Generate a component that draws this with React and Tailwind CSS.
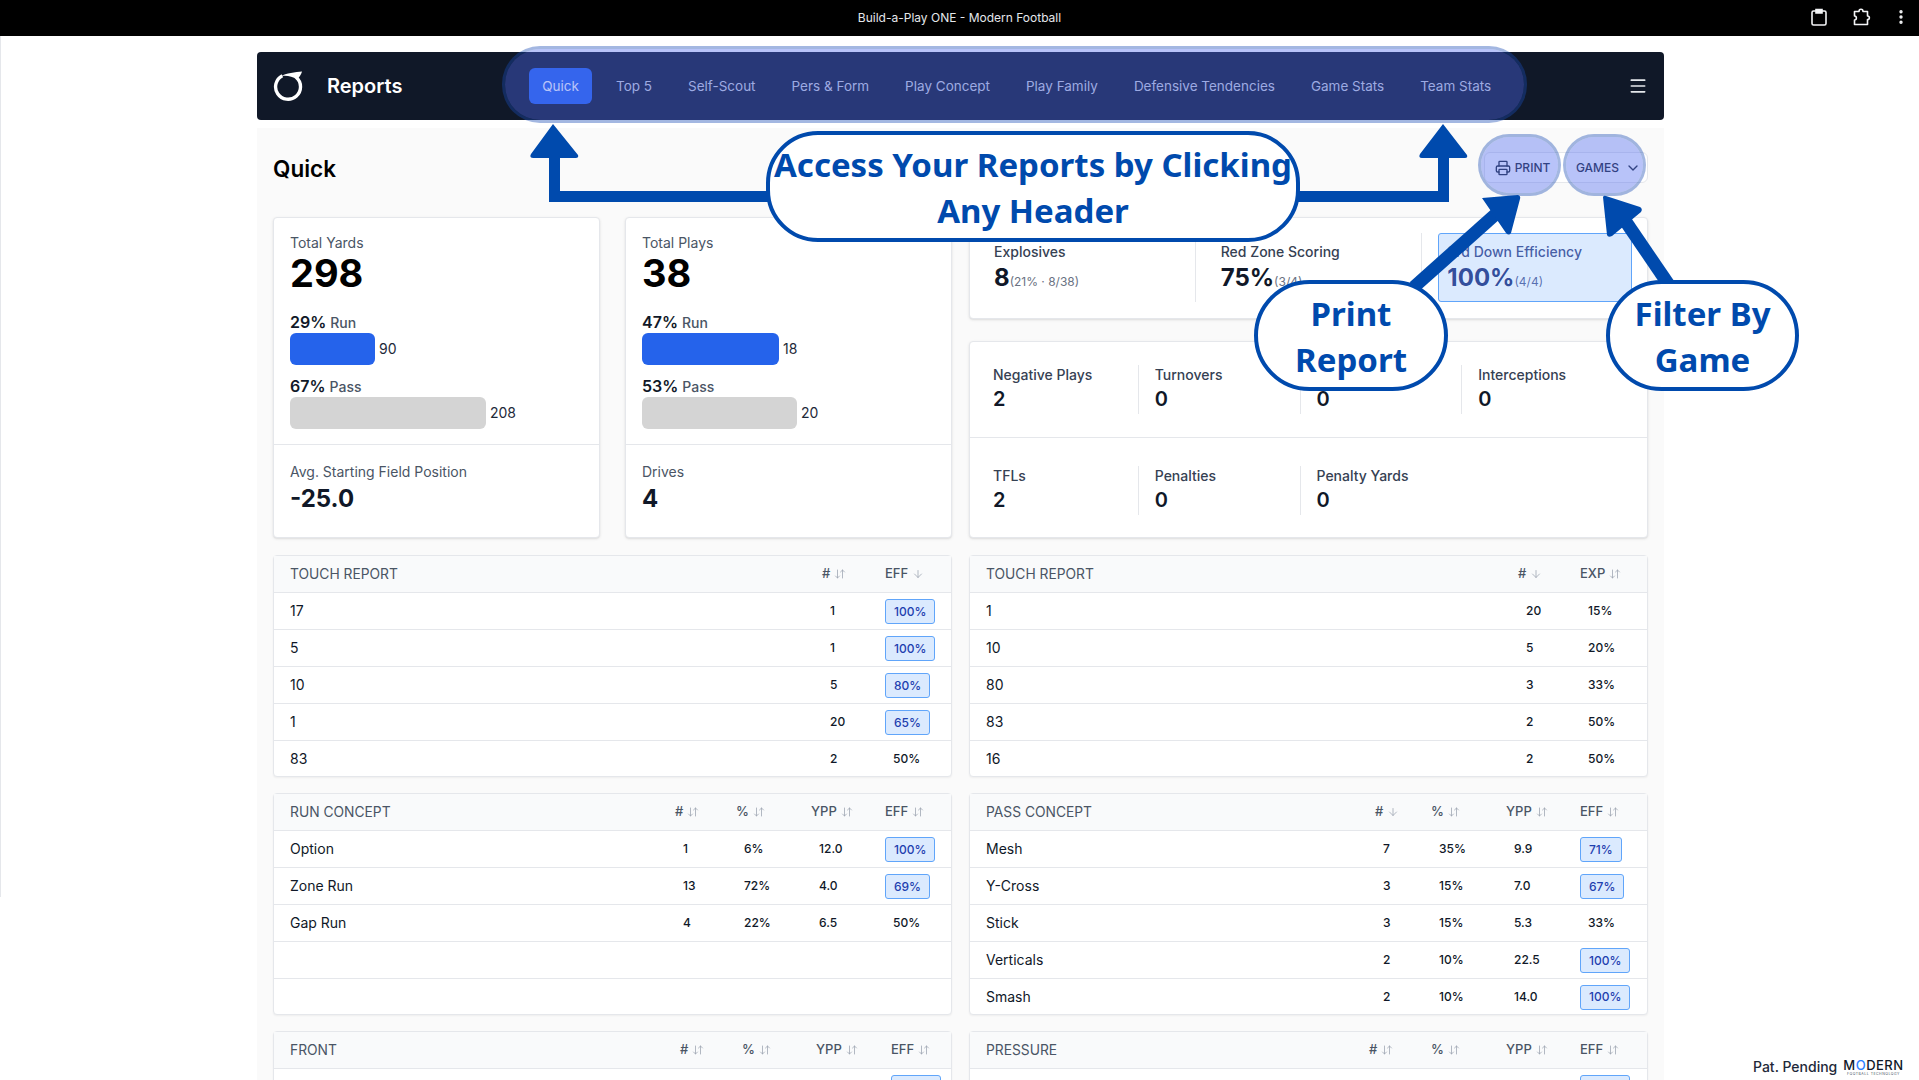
import React from "react";
import { ArrowDown, ArrowDownUp, ChevronDown, EllipsisVertical, Menu, Printer } from "lucide-react";

const NAV = ["Top 5", "Self-Scout", "Pers & Form", "Play Concept", "Play Family", "Defensive Tendencies", "Game Stats", "Team Stats"];

const Badge = ({ children }) => (
  <span className="inline-flex h-[25px] items-center rounded-[3px] border-[1.5px] border-[#60a5fa] bg-[#dbeafe] px-2 text-xs font-medium text-[#1e40af]">
    {children}
  </span>
);

// b() marks a cell that shows up as a highlighted badge
const b = (text) => ({ badge: text });

const Head = ({ label, down }) => (
  <div className="flex items-center gap-1 text-[13px] font-medium text-gray-600">
    {label}
    {down ? <ArrowDown className="size-3 text-gray-400" strokeWidth={1.5} /> : <ArrowDownUp className="size-3 text-gray-400" strokeWidth={1.5} />}
  </div>
);

const DataTable = ({ title, cols, heads, rows }) => (
  <div className="rounded-[4px] border border-gray-200 bg-white shadow-xs">
    <div className={`grid h-[36px] items-center bg-gray-50 ${cols}`}>
      <div className="pl-4 text-[13.8px] text-gray-600">{title}</div>
      {heads.map((h) => (
        <Head key={h.label} label={h.label} down={h.down} />
      ))}
    </div>
    {rows.map((row, i) => (
      <div key={i} className={`grid h-[37px] items-center border-t border-gray-200 last:h-[36px] ${cols}`}>
        <div className="pl-4 text-sm text-gray-900">{row[0]}</div>
        {row.slice(1).map((cell, j) =>
          cell.badge ? (
            <div key={j}>
              <Badge>{cell.badge}</Badge>
            </div>
          ) : (
            <div key={j} className="pl-2 text-xs font-medium text-gray-900">
              {cell}
            </div>
          )
        )}
      </div>
    ))}
  </div>
);

const BarRow = ({ pct, label, value, barClass }) => (
  <div>
    <div className="flex h-5 items-baseline gap-1 leading-5">
      <span className="text-base font-semibold text-gray-900">{pct}</span>
      <span className="text-sm font-medium text-gray-600">{label}</span>
    </div>
    <div className="mt-[3px] flex items-center gap-1">
      <div className={`h-8 rounded-md ${barClass}`} />
      <span className="text-sm text-gray-800">{value}</span>
    </div>
  </div>
);

const TotalCard = ({ label, total, run, pass, footLabel, footValue }) => (
  <div className="h-[321px] rounded-[4px] border border-gray-200 bg-white shadow-sm">
    <div className="h-[227px] border-b border-gray-200 px-4 pt-[15px]">
      <div className="text-sm leading-5 text-gray-600">{label}</div>
      <div className="text-[38px] font-bold leading-10 text-black">{total}</div>
      <div className="mt-[17px]">
        <BarRow {...run} />
      </div>
      <div className="mt-[9px]">
        <BarRow {...pass} />
      </div>
    </div>
    <div className="px-4 pt-[17px]">
      <div className="text-sm leading-5 text-gray-600">{footLabel}</div>
      <div className="mt-px text-2xl font-bold text-gray-900">{footValue}</div>
    </div>
  </div>
);

const Stat = ({ label, value, last }) => (
  <div className={`mr-2 h-[49px] pl-2 ${last ? "" : "border-r border-gray-200"}`}>
    <div className="text-sm font-medium leading-5 text-gray-700">{label}</div>
    <div className="text-xl font-semibold leading-7 text-gray-900">{value}</div>
  </div>
);

const Kpi = ({ label, value, note, active }) => (
  <div className={`h-[69px] flex-1 rounded-[3px] border px-2 py-2 ${active ? "border-[#60a5fa] bg-[#dbeafe]" : "border-transparent"}`}>
    <div className={`text-sm font-medium leading-5 ${active ? "text-blue-900/80" : "text-gray-700"}`}>{label}</div>
    <div className={`flex items-baseline text-2xl font-bold leading-8 ${active ? "text-blue-900/90" : "text-gray-900"}`}>
      {value}
      <span className={`text-xs font-normal ${active ? "text-blue-900/70" : "text-gray-500"}`}>{note}</span>
    </div>
  </div>
);

const Callout = ({ className, children }) => (
  <div className={`absolute flex items-center justify-center whitespace-nowrap border-4 border-[#004aad] bg-white pt-0.5 text-center font-['Noto_Sans',sans-serif] font-bold text-[#004aad] ${className}`}>
    <div>{children}</div>
  </div>
);

const Arrows = () => (
  <svg className="pointer-events-none absolute left-0 top-0" width="1919" height="1080" fill="#004aad">
    <path d="M553 124 L578 155 Q579 158 576 158 L560 158 L560 191 L770 191 L770 202 L549 202 L549 158 L533 158 Q529 158 531 154 Z" strokeLinejoin="round" />
    <path d="M1443 124 L1467 155 Q1468 158 1465 158 L1449 158 L1449 202 L1298 202 L1298 191 L1438 191 L1438 158 L1422 158 Q1418 158 1420 154 Z" />
    <path d="M1414 287 L1497 213" stroke="#004aad" strokeWidth="13" />
    <path d="M1482 198 L1518 195 Q1521 196 1520 199 L1511 233 Q1509 236 1506 233 Z" />
    <path d="M1671 288 L1626 222" stroke="#004aad" strokeWidth="13" />
    <path d="M1603 197 Q1604 195 1606 196 L1640 207 Q1643 209 1641 212 L1612 236 Q1608 238 1607 235 Z" />
  </svg>
);

export default function App() {
  return (
    <div className="relative h-screen overflow-hidden bg-white font-['Inter',sans-serif]">
      {/* browser title bar */}
      <div className="relative flex h-9 items-center justify-center bg-black text-xs text-gray-200">
        Build-a-Play ONE - Modern Football
        <div className="absolute right-[9px] top-[8px] flex items-center text-gray-100">
          <svg width="16" height="18" viewBox="0 0 16 18" fill="none" stroke="currentColor" strokeWidth="1.6">
            <rect x="1" y="3" width="14" height="14" rx="1.5" />
            <path d="M5 1.5h6V5H5z" fill="currentColor" />
          </svg>
          <svg className="ml-[26px]" width="18" height="18" viewBox="0 0 18 18" fill="none" stroke="currentColor" strokeWidth="1.6" strokeLinejoin="round">
            <path d="M1.5 3.5h4.5c0-3 4-3 4 0h4.5v4.5c2.5 0 2.5 3.5 0 3.5v5H1.5v-4.5c2.5 0 2.5-4 0-4z" />
          </svg>
          <EllipsisVertical className="ml-[21px] size-[18px]" strokeWidth={2.5} />
        </div>
      </div>

      <div className="ml-[257px] w-[1407px] pt-4">
        {/* reports header */}
        <div className="flex h-[68px] items-center rounded-[4px] bg-gray-900 pl-4 pr-[16px]">
          <svg width="30" height="30" viewBox="0 0 32 32" className="shrink-0">
            <path d="M10 5 A13.3 13.3 0 1 0 25 7" fill="none" stroke="#fff" strokeWidth="3.6" />
            <path d="M8 5.5 C14 2.5 24 1 31 .5 C30 4 28 7 25 9 C21 5.5 14 4.5 8 5.5Z" fill="#fff" />
          </svg>
          <div className="ml-[24px] w-[202px] text-xl font-semibold text-white">Reports</div>
          <nav className="flex items-center gap-2">
            <div className="mr-0.5 flex h-9 w-[63px] items-center justify-center rounded-md bg-[#2563eb] text-[13.5px] text-white">Quick</div>
            {NAV.map((item) => (
              <div key={item} className="px-[14px] text-[13.5px] text-gray-300">
                {item}
              </div>
            ))}
          </nav>
          <Menu className="ml-auto size-[20px] text-gray-200" />
        </div>

        {/* report body */}
        <div className="mt-2 h-[1000px] bg-neutral-50 px-4 pt-6">
          <div className="flex h-[31px] items-center justify-between">
            <div className="mt-0.5 text-[22.5px] font-semibold text-black">Quick</div>
            <div className="flex h-[31px] items-center rounded-md border border-gray-200 bg-white text-xs font-medium text-gray-800">
              <div className="flex w-[75px] items-center justify-center gap-1">
                <Printer className="size-4" />
                PRINT
              </div>
              <div className="flex w-[87px] items-center justify-center gap-1.5 pl-[10px]">
                GAMES
                <ChevronDown className="size-4" />
              </div>
            </div>
          </div>

          <div className="mt-[34px] grid grid-cols-[679px_1fr] gap-x-[17px]">
            <div className="grid grid-cols-2 gap-x-[25px]">
              <TotalCard
                label="Total Yards"
                total="298"
                run={{ pct: "29%", label: "Run", value: "90", barClass: "w-[85px] bg-[#2563eb]" }}
                pass={{ pct: "67%", label: "Pass", value: "208", barClass: "w-[196px] bg-neutral-300" }}
                footLabel="Avg. Starting Field Position"
                footValue="-25.0"
              />
              <TotalCard
                label="Total Plays"
                total="38"
                run={{ pct: "47%", label: "Run", value: "18", barClass: "w-[137px] bg-[#2563eb]" }}
                pass={{ pct: "53%", label: "Pass", value: "20", barClass: "w-[155px] bg-neutral-300" }}
                footLabel="Drives"
                footValue="4"
              />
            </div>

            <div className="flex flex-col gap-[22px]">
              <div className="flex h-[102px] rounded-[4px] border border-gray-200 bg-white pl-[15px] pr-[15px] pt-[15px] shadow-sm">
                <Kpi label="Explosives" value="8" note="(21% · 8/38)" />
                <div className="mx-4 h-[69px] w-px bg-gray-200" />
                <Kpi label="Red Zone Scoring" value="75%" note="(3/4)" />
                <div className="mx-4 h-[69px] w-px bg-gray-200" />
                <Kpi label="3rd Down Efficiency" value="100%" note="(4/4)" active />
              </div>
              <div className="h-[197px] rounded-[4px] border border-gray-200 bg-white shadow-sm">
                <div className="grid h-[96px] grid-cols-4 border-b border-gray-200 pl-[15px] pr-[15px] pt-[23px]">
                  <Stat label="Negative Plays" value="2" />
                  <Stat label="Turnovers" value="0" />
                  <Stat label="Fumbles" value="0" />
                  <Stat label="Interceptions" value="0" last />
                </div>
                <div className="grid grid-cols-4 pl-[15px] pr-[15px] pt-[28px]">
                  <Stat label="TFLs" value="2" />
                  <Stat label="Penalties" value="0" />
                  <Stat label="Penalty Yards" value="0" last />
                </div>
              </div>
            </div>
          </div>

          <div className="mt-[17px] grid grid-cols-[679px_1fr] gap-x-[17px] gap-y-4">
            <DataTable
              title="TOUCH REPORT"
              cols="grid-cols-[1fr_63px_66px]"
              heads={[{ label: "#" }, { label: "EFF", down: true }]}
              rows={[
                ["17", "1", b("100%")],
                ["5", "1", b("100%")],
                ["10", "5", b("80%")],
                ["1", "20", b("65%")],
                ["83", "2", "50%"],
              ]}
            />
            <DataTable
              title="TOUCH REPORT"
              cols="grid-cols-[1fr_62px_67px]"
              heads={[{ label: "#", down: true }, { label: "EXP" }]}
              rows={[
                ["1", "20", "15%"],
                ["10", "5", "20%"],
                ["80", "3", "33%"],
                ["83", "2", "50%"],
                ["16", "2", "50%"],
              ]}
            />
            <DataTable
              title="RUN CONCEPT"
              cols="grid-cols-[1fr_61px_75px_74px_66px]"
              heads={[{ label: "#" }, { label: "%" }, { label: "YPP" }, { label: "EFF" }]}
              rows={[
                ["Option", "1", "6%", "12.0", b("100%")],
                ["Zone Run", "13", "72%", "4.0", b("69%")],
                ["Gap Run", "4", "22%", "6.5", "50%"],
                ["", "", "", "", ""],
                ["", "", "", "", ""],
              ]}
            />
            <DataTable
              title="PASS CONCEPT"
              cols="grid-cols-[1fr_56px_75px_74px_67px]"
              heads={[{ label: "#", down: true }, { label: "%" }, { label: "YPP" }, { label: "EFF" }]}
              rows={[
                ["Mesh", "7", "35%", "9.9", b("71%")],
                ["Y-Cross", "3", "15%", "7.0", b("67%")],
                ["Stick", "3", "15%", "5.3", "33%"],
                ["Verticals", "2", "10%", "22.5", b("100%")],
                ["Smash", "2", "10%", "14.0", b("100%")],
              ]}
            />
            <DataTable
              title="FRONT"
              cols="grid-cols-[1fr_62px_74px_75px_60px]"
              heads={[{ label: "#" }, { label: "%" }, { label: "YPP" }, { label: "EFF" }]}
              rows={[["", "", "", "", b("100%")]]}
            />
            <DataTable
              title="PRESSURE"
              cols="grid-cols-[1fr_62px_75px_74px_67px]"
              heads={[{ label: "#" }, { label: "%" }, { label: "YPP" }, { label: "EFF" }]}
              rows={[["", "", "", "", b("100%")]]}
            />
          </div>
        </div>
      </div>

      {/* tutorial highlights laid over the page */}
      <div className="absolute left-0 top-9 h-[861px] w-px bg-gray-200" />
      <div className="absolute left-[502px] top-[46px] h-[77px] w-[1025px] rounded-[38px] border-[3px] border-[#194bb4]/40 bg-[#4d69f0]/40 bg-clip-padding" />
      <div className="absolute left-[1478px] top-[134px] h-[62px] w-[83px] rounded-[31px] border-[3px] border-[#194bb4]/40 bg-[#4d69f0]/40 bg-clip-padding" />
      <div className="absolute left-[1563px] top-[134px] h-[62px] w-[83px] rounded-[31px] border-[3px] border-[#194bb4]/40 bg-[#4d69f0]/40 bg-clip-padding" />
      <Arrows />
      <Callout className="left-[766px] top-[131px] h-[111px] w-[534px] rounded-[52px] text-[33px] leading-[46px]">
        Access Your Reports by Clicking
        <br />
        Any Header
      </Callout>
      <Callout className="left-[1254px] top-[280px] h-[111px] w-[194px] rounded-[56px] text-[33px] leading-[46px]">
        Print
        <br />
        Report
      </Callout>
      <Callout className="left-[1606px] top-[280px] h-[111px] w-[193px] rounded-[56px] text-[33px] leading-[46px]">
        Filter By
        <br />
        Game
      </Callout>

      {/* patent note */}
      <div className="absolute left-[1753px] top-[1057px] flex items-center gap-1.5">
        <span className="text-sm font-medium text-gray-800">Pat. Pending</span>
        <div className="flex flex-col items-center">
          <div className="text-[13px] font-medium leading-[14px] tracking-[.5px] text-gray-900">
            M<span className="text-blue-500">O</span>DERN
          </div>
          <div className="text-[3.5px] leading-[5px] tracking-[.5px] text-gray-600">FOOTBALL TECHNOLOGY</div>
        </div>
      </div>
    </div>
  );
}
